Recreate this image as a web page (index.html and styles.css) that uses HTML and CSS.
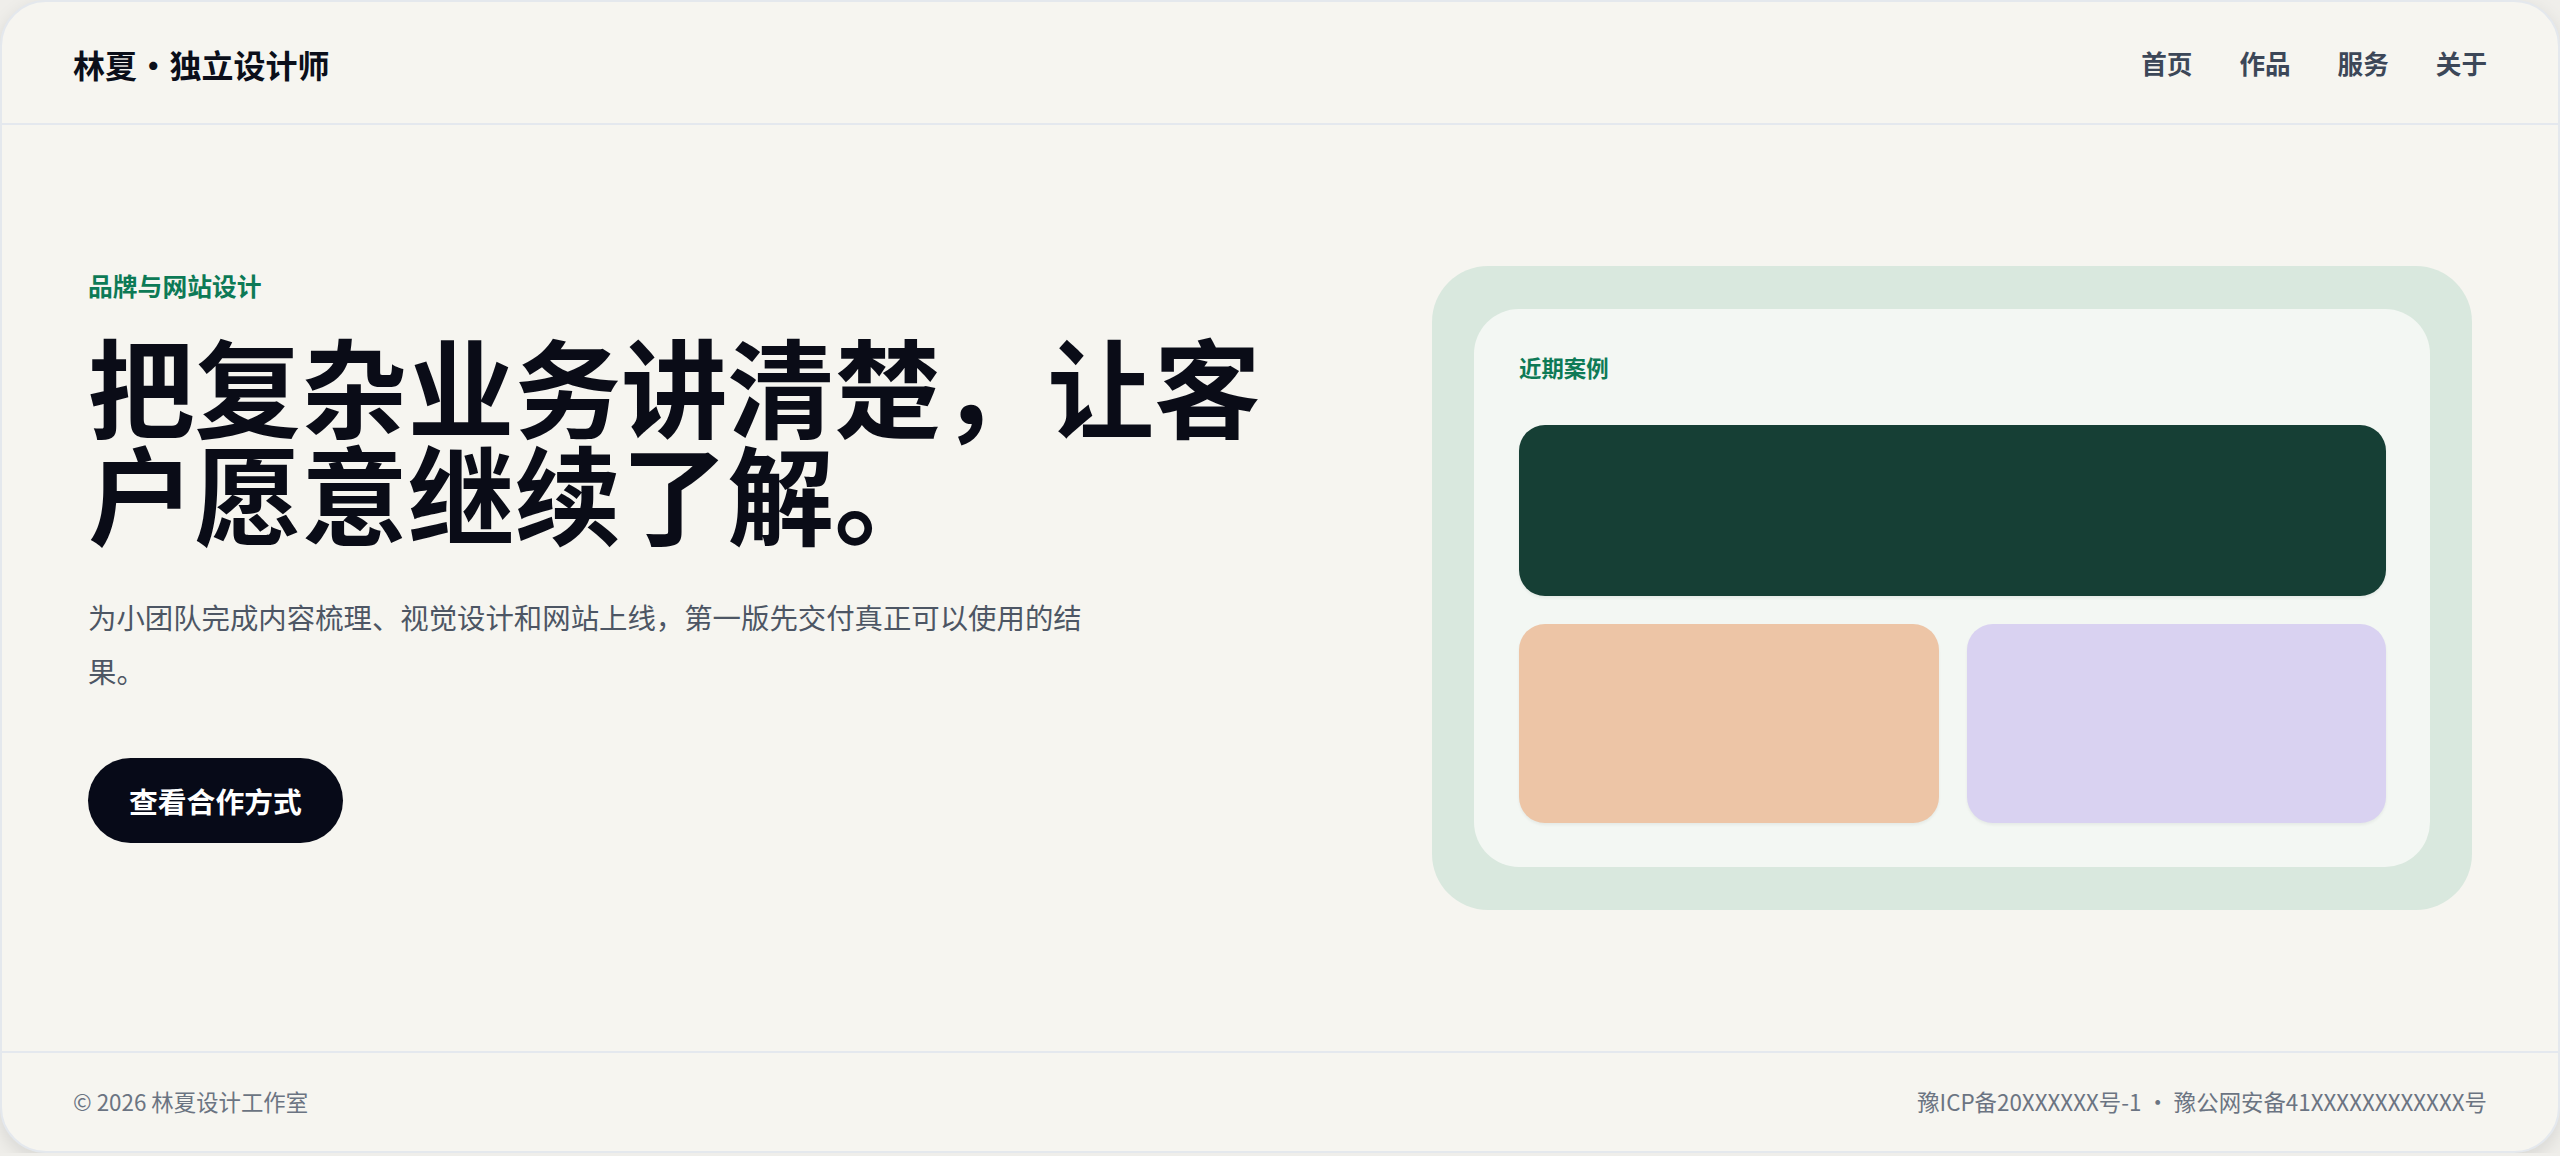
FILE: index.html
```html
<!DOCTYPE html>
<html lang="zh-CN">
<head>
<meta charset="utf-8">
<title>林夏 · 独立设计师</title>
<link rel="stylesheet" href="styles.css">
</head>
<body>
<div class="site">
  <header class="header">
    <div class="logo">林夏 · 独立设计师</div>
    <nav class="nav">
      <a href="#">首页</a>
      <a href="#">作品</a>
      <a href="#">服务</a>
      <a href="#">关于</a>
    </nav>
  </header>
  <main class="hero">
    <section class="hero-text">
      <div class="eyebrow">品牌与网站设计</div>
      <h1 class="title">把复杂业务讲清楚，让客户愿意继续了解。</h1>
      <p class="lead">为小团队完成内容梳理、视觉设计和网站上线，第一版先交付真正可以使用的结果。</p>
      <a class="btn" href="#">查看合作方式</a>
    </section>
    <section class="showcase">
      <div class="showcase-inner">
        <div class="showcase-label">近期案例</div>
        <div class="block block-dark"></div>
        <div class="block-row">
          <div class="block block-peach"></div>
          <div class="block block-lavender"></div>
        </div>
      </div>
    </section>
  </main>
  <footer class="footer">
    <div class="copy">© 2026 林夏设计工作室</div>
    <div class="beian">豫ICP备20XXXXXX号-1 · 豫公网安备41XXXXXXXXXXXX号</div>
  </footer>
</div>
</body>
</html>
```

FILE: styles.css
```css
* {
  box-sizing: border-box;
}

html, body {
  margin: 0;
  padding: 0;
  background: #efeeea;
}

body {
  font-family: "Noto Sans CJK SC", "Noto Sans", sans-serif;
  color: #0a0c17;
}

.site {
  width: 100%;
  height: 1153px;
  display: flex;
  flex-direction: column;
  background: #f6f5f0;
  border: 2px solid #e4e8ed;
  border-radius: 46px;
  box-shadow: 0 6px 18px rgba(0, 0, 0, 0.10);
  overflow: hidden;
}

.header {
  height: 123px;
  flex: 0 0 auto;
  display: flex;
  align-items: center;
  justify-content: space-between;
  padding: 0 71px;
  border-bottom: 2px solid #e4e8ee;
}

.logo {
  font-size: 32px;
  font-weight: 700;
  color: #0b0f1a;
  line-height: 1;
  margin-top: 2px;
  word-spacing: -7px;
}

.nav {
  display: flex;
  gap: 47px;
}

.nav a {
  font-size: 25.6px;
  font-weight: 700;
  color: #3c4758;
  text-decoration: none;
  line-height: 1;
}

.hero {
  flex: 1 1 auto;
  display: grid;
  grid-template-columns: 1fr 1040px;
  column-gap: 160px;
  align-items: center;
  padding: 0 86px;
}

.hero-text {
  padding-bottom: 66px;
}

.eyebrow {
  font-size: 24.8px;
  font-weight: 700;
  color: #0d7a56;
  line-height: 36px;
}

.title {
  margin: 27px 0 0;
  font-size: 106.6px;
  line-height: 107px;
  font-weight: 700;
  color: #0a0c17;
}

.lead {
  margin: 46px 0 0;
  max-width: 1020px;
  font-size: 28.4px;
  line-height: 54px;
  color: #4d5664;
}

.btn {
  display: inline-block;
  margin-top: 60px;
  height: 85px;
  line-height: 85px;
  padding: 0 41px;
  border-radius: 43px;
  background: #070a18;
  color: #ffffff;
  font-size: 28.8px;
  font-weight: 700;
  text-decoration: none;
}

.showcase {
  background: #d9e8de;
  border-radius: 56px;
  padding: 43px 42px;
}

.showcase-inner {
  background: #f3f7f3;
  border-radius: 45px;
  padding: 41px 44px 44px 45px;
}

.showcase-label {
  font-size: 22.4px;
  font-weight: 700;
  color: #0d7a56;
  line-height: 34px;
}

.block {
  border-radius: 26px;
  box-shadow: 0 2px 3px rgba(20, 40, 30, 0.06);
}

.block-dark {
  margin-top: 41px;
  height: 171px;
  background: #163f35;
}

.block-row {
  margin-top: 28px;
  display: grid;
  grid-template-columns: 1fr 1fr;
  gap: 28px;
}

.block-peach {
  height: 199px;
  background: #edc5a6;
}

.block-lavender {
  height: 199px;
  background: #d9d2f1;
}

.footer {
  flex: 0 0 100px;
  display: flex;
  align-items: center;
  justify-content: space-between;
  padding: 0 71px 2px;
  border-top: 2px solid #e4e8ee;
  font-size: 22.4px;
  color: #6b7482;
}
```
